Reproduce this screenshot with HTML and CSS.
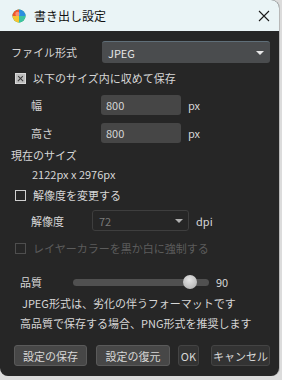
FILE: index.html
```html
<!DOCTYPE html>
<html lang="ja">
<head>
<meta charset="utf-8">
<link rel="stylesheet" href="styles.css">
</head>
<body>
<div class="window">
  <div class="titlebar">
    <svg class="appicon" width="14" height="14" viewBox="0 0 14 14">
      <defs>
        <radialGradient id="g1" cx="0.35" cy="0.3" r="0.8">
          <stop offset="0" stop-color="#ffe066"/>
          <stop offset="1" stop-color="#f08a24"/>
        </radialGradient>
      </defs>
      <circle cx="7" cy="7" r="6.5" fill="#2fa84f"/>
      <path d="M7 7 L7 0.5 A6.5 6.5 0 0 1 13.5 7 Z" fill="#2b8fe0"/>
      <path d="M7 7 L13.5 7 A6.5 6.5 0 0 1 7 13.5 Z" fill="#3cc4a0"/>
      <path d="M7 7 L0.5 7 A6.5 6.5 0 0 1 7 0.5 Z" fill="#f2562c"/>
      <path d="M7 7 L7 13.5 A6.5 6.5 0 0 1 0.5 7 Z" fill="#f7c531"/>
      <circle cx="5.5" cy="5" r="2.2" fill="#fff" opacity="0.35"/>
    </svg>
    <span class="title">書き出し設定</span>
    <svg class="close" width="12" height="12" viewBox="0 0 12 12">
      <path d="M1 1 L11 11 M11 1 L1 11" stroke="#1a1a1a" stroke-width="1.1" fill="none"/>
    </svg>
  </div>
  <div class="content">
    <div class="row r1">
      <span class="lbl main">ファイル形式</span>
      <div class="select fmt"><span>JPEG</span><i class="arrow"></i></div>
    </div>
    <div class="row r2">
      <span class="cb checked"></span>
      <span class="lbl">以下のサイズ内に収めて保存</span>
    </div>
    <div class="row r3">
      <span class="lbl sub">幅</span>
      <div class="input">800</div>
      <span class="unit">px</span>
    </div>
    <div class="row r4">
      <span class="lbl sub">高さ</span>
      <div class="input">800</div>
      <span class="unit">px</span>
    </div>
    <div class="row r5">
      <span class="lbl main">現在のサイズ</span>
    </div>
    <div class="row r6">
      <span class="size">2122px x 2976px</span>
    </div>
    <div class="row r7">
      <span class="cb"></span>
      <span class="lbl">解像度を変更する</span>
    </div>
    <div class="row r8">
      <span class="lbl sub sub2">解像度</span>
      <div class="select dis"><span>72</span><i class="arrow"></i></div>
      <span class="unit dpi">dpi</span>
    </div>
    <div class="row r9 disabled">
      <span class="cb"></span>
      <span class="lbl">レイヤーカラーを黒か白に強制する</span>
    </div>
    <div class="row r10">
      <span class="lbl q">品質</span>
      <div class="slider"><div class="track"></div><div class="thumb"></div></div>
      <span class="val">90</span>
    </div>
    <div class="row r11"><span class="note n1">JPEG形式は、劣化の伴うフォーマットです</span></div>
    <div class="row r12"><span class="note n2">高品質で保存する場合、PNG形式を推奨します</span></div>
    <div class="row buttons">
      <button class="btn b1">設定の保存</button>
      <button class="btn b2">設定の復元</button>
      <button class="btn ok">OK</button>
      <button class="btn cancel">キャンセル</button>
    </div>
  </div>
</div>
</body>
</html>
```
FILE: styles.css
```css
html, body {
  margin: 0;
  padding: 0;
  background: #dcdcdc;
  width: 282px;
  height: 380px;
  overflow: hidden;
}
body {
  font-family: "Noto Sans CJK JP", "Noto Sans", sans-serif;
  font-size: 11px;
  color: #d6d6d6;
}
.window {
  width: 279px;
  height: 376px;
  background: #262626;
  border-radius: 0 8px 8px 8px;
  overflow: hidden;
  box-shadow: 1px 0 0 #b8b8b8;
  display: flex;
  flex-direction: column;
}
.titlebar {
  height: 31px;
  background: #eaf4f6;
  display: flex;
  align-items: center;
  padding-left: 12px;
  padding-right: 10px;
  flex-shrink: 0;
}
.appicon { margin-right: 8px; margin-top: 1px; }
.title {
  font-size: 12px;
  color: #111;
  flex: 1;
}
.close { margin-top: 0; margin-right: -1px; }
.content {
  display: flex;
  flex-direction: column;
  padding-left: 11px;
}
.row {
  display: flex;
  align-items: center;
}
.r1 { margin-top: 10px; height: 22px; }
.r2 { margin-top: 7px; height: 16px; }
.r3 { margin-top: 9px; height: 20px; }
.r4 { margin-top: 8px; height: 20px; }
.r5 { margin-top: 5px; height: 14px; }
.r6 { margin-top: 5px; height: 14px; }
.r7 { margin-top: 6px; height: 16px; }
.r8 { margin-top: 7px; height: 21px; }
.r9 { margin-top: 9px; height: 16px; }
.r10 { margin-top: 18px; height: 16px; }
.r11 { margin-top: 5px; height: 16px; }
.r12 { margin-top: 4px; height: 16px; }
.buttons { margin-top: 14px; height: 21px; }

.lbl { white-space: nowrap; }
.lbl.main { width: 91px; }
.lbl.sub { margin-left: 20px; width: 70px; }
.lbl.sub2 { width: 61px; }
.cb {
  width: 9px;
  height: 9px;
  border: 1px solid #cfcfcf;
  margin-left: 4px;
  margin-right: 7px;
  flex-shrink: 0;
  position: relative;
}
.cb.checked {
  background: #bdbdbd;
  border-color: #d8d8d8;
}
.cb.checked::before, .cb.checked::after {
  content: "";
  position: absolute;
  left: 1px;
  top: 4px;
  width: 7px;
  height: 1.4px;
  background: #3a3a3a;
  transform: rotate(45deg);
}
.cb.checked::after { transform: rotate(-45deg); }
.disabled { color: #5c5c5c; }
.disabled .cb { border-color: #4e4e4e; }

.select {
  display: flex;
  align-items: center;
  box-sizing: border-box;
  border-radius: 3px;
}
.select span { flex: 1; }
.fmt {
  width: 168px;
  height: 22px;
  background: #4a4c4e;
  border-top: 1px solid #5f6e78;
  padding-left: 6px;
  padding-right: 6px;
  color: #e6e6e6;
}
.arrow {
  width: 0;
  height: 0;
  border-left: 4px solid transparent;
  border-right: 4px solid transparent;
  border-top: 4px solid #e8e8e8;
}
.dis {
  width: 97px;
  height: 21px;
  border: 1px solid #3e3e3e;
  background: #262626;
  padding-left: 6px;
  padding-right: 5px;
  color: #7a7a7a;
}
.dis .arrow { border-top-color: #b0b0b0; }
.input {
  width: 80px;
  height: 20px;
  box-sizing: border-box;
  background: #464646;
  border-radius: 3px;
  padding-left: 5px;
  display: flex;
  align-items: center;
  color: #d6d6d6;
}
.unit { margin-left: 7px; }
.dpi { margin-left: 7px; }
.size { margin-left: 21px; }
.q { margin-left: 9px; width: 53px; }
.slider {
  position: relative;
  width: 136px;
  height: 16px;
  display: flex;
  align-items: center;
}
.track {
  width: 100%;
  height: 7px;
  border-radius: 4px;
  background: #505050;
}
.thumb {
  position: absolute;
  left: 110px;
  top: 1px;
  width: 14px;
  height: 14px;
  border-radius: 50%;
  background: radial-gradient(circle at 45% 35%, #e4e4e4, #a9a9a9);
}
.val { margin-left: 7px; }
.n1 { margin-left: 11px; }
.n2 { margin-left: 9px; }

.btn {
  font-family: inherit;
  font-size: 11px;
  color: #d8d8d8;
  background: #474747;
  border: 1px solid #5a5a5a;
  border-radius: 3px;
  height: 21px;
  padding: 0;
  display: flex;
  align-items: center;
  justify-content: center;
}
.b1 { margin-left: 3px; width: 73px; }
.b2 { margin-left: 9px; width: 74px; }
.ok { margin-left: 8px; width: 21px; background: #333; border-color: #444; }
.cancel { margin-left: 12px; width: 59px; background: #333; border-color: #444; }
```
